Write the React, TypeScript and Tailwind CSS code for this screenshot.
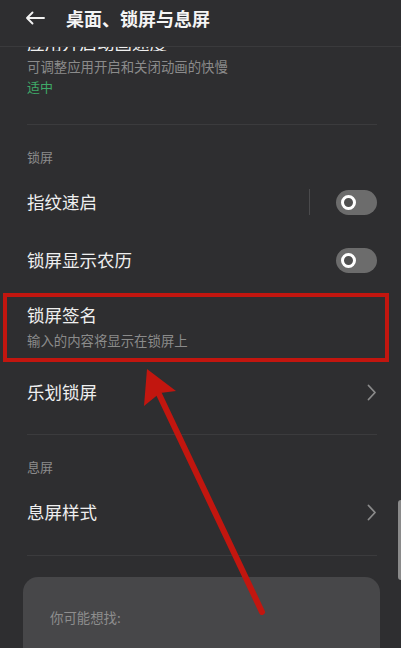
import React from 'react';

const font = { fontFamily: '"Noto Sans CJK SC", "Noto Sans", sans-serif' };

function Toggle() {
  return (
    <div className="w-[41px] h-[25px] rounded-full bg-[#6c6c6c] flex items-center pl-[5px]">
      <div className="w-[15px] h-[15px] rounded-full border-[3px] border-white bg-[#505050]" />
    </div>
  );
}

function Chevron() {
  return (
    <svg width="10" height="17" viewBox="0 0 10 17" fill="none">
      <path d="M1.5 1.5 L8 8.5 L1.5 15.5" stroke="#8a8a8a" strokeWidth="1.8" strokeLinecap="round" strokeLinejoin="round" />
    </svg>
  );
}

function Divider() {
  return <div className="ml-[27px] mr-[24px] h-px bg-[#3b3b3d]" />;
}

function SectionLabel({ text }: { text: string }) {
  return (
    <div className="h-[48px] flex items-end pb-[6px] px-[27px]">
      <span className="text-[13px] leading-[20px] text-[#8b8b8b]">{text}</span>
    </div>
  );
}

function Row({ title, right }: { title: string; right?: React.ReactNode }) {
  return (
    <div className="h-[58px] flex items-center justify-between pl-[27px] pr-[24px]">
      <span className="text-[17.5px] leading-[24px] text-[#efefef]">{title}</span>
      {right}
    </div>
  );
}

export default function App() {
  return (
    <div className="relative w-[401px] h-[648px] overflow-hidden bg-[#2e2e30]" style={font}>
      {/* Header */}
      <div className="h-[47px] flex items-start pt-[7px] border-b border-[#3a3a3c]">
        <div className="w-[66px] h-[22px] flex items-center pl-[25px]">
          <svg width="20" height="14" viewBox="0 0 20 14" fill="none">
            <path d="M19 7 H2 M7.5 1.5 L2 7 L7.5 12.5" stroke="#f2f2f2" strokeWidth="1.9" strokeLinecap="round" strokeLinejoin="round" />
          </svg>
        </div>
        <span className="text-[18px] leading-[22px] font-semibold text-[#f4f4f4]">桌面、锁屏与息屏</span>
      </div>

      {/* Animation speed (scrolled under header) */}
      <div className="px-[27px] h-[77px]">
        <div className="h-[4px] overflow-hidden">
          <div className="-mt-[16px] text-[17.5px] leading-[24px] text-[#efefef]">应用开启动画速度</div>
        </div>
        <div className="mt-[5px] text-[13.4px] leading-[20px] text-[#8b8b8b]">可调整应用开启和关闭动画的快慢</div>
        <div className="mt-px text-[13px] leading-[20px] text-[#3fa968]">适中</div>
      </div>
      <Divider />

      <SectionLabel text="锁屏" />
      <Row
        title="指纹速启"
        right={
          <div className="flex items-center gap-[26px]">
            <div className="w-px h-[26px] bg-[#4a4a4c]" />
            <Toggle />
          </div>
        }
      />
      <Row title="锁屏显示农历" right={<Toggle />} />

      <div className="h-[74px] pl-[27px] pt-[14px]">
        <div className="text-[17.5px] leading-[24px] text-[#efefef]">锁屏签名</div>
        <div className="mt-[4px] text-[13.4px] leading-[18px] text-[#8b8b8b]">输入的内容将显示在锁屏上</div>
      </div>
      <Row title="乐划锁屏" right={<Chevron />} />
      <div className="h-[13px]" />
      <Divider />

      <SectionLabel text="息屏" />
      <Row title="息屏样式" right={<Chevron />} />
      <div className="h-[14px]" />
      <Divider />

      <div className="mt-[21px] ml-[23px] mr-[21px] h-[120px] rounded-[15px] bg-[#474749] pt-[27px] pl-[27px]">
        <span className="text-[13.4px] leading-[20px] text-[#8e8e8e]">你可能想找:</span>
      </div>

      {/* Scrollbar */}
      <div className="absolute right-0 top-[500px] w-[3px] h-[80px] rounded-l bg-[#8a8a8a]" />

      {/* Annotation: highlight box */}
      <div className="absolute left-[3px] top-[293px] w-[386px] h-[69px] border-[4px] border-[#c2160f]" />

      {/* Annotation: arrow */}
      <svg className="absolute left-0 top-0 pointer-events-none" width="401" height="648" viewBox="0 0 401 648">
        <line x1="158" y1="392" x2="262" y2="612" stroke="#c2160f" strokeWidth="6" strokeLinecap="round" />
        <polygon points="147,369 176,391 160,393 144,406" fill="#c2160f" />
      </svg>
    </div>
  );
}
